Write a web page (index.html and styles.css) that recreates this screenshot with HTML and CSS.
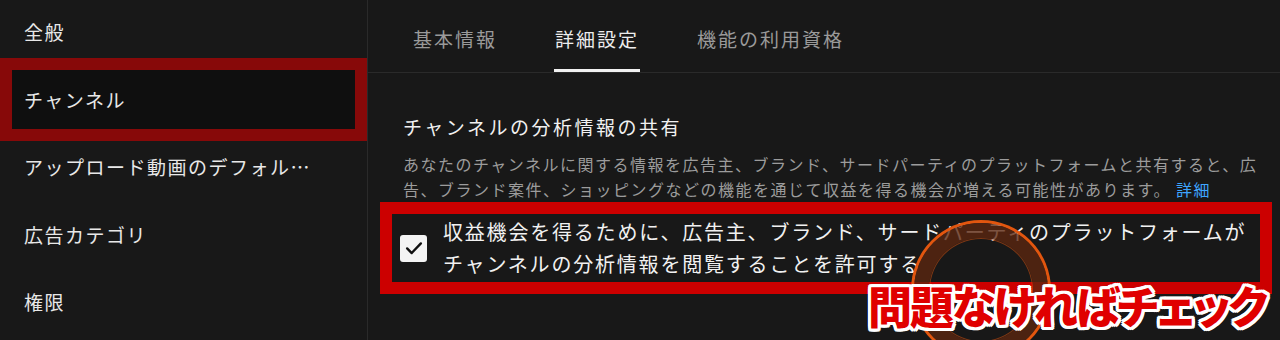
FILE: index.html
```html
<!DOCTYPE html>
<html lang="ja">
<head>
  <meta charset="UTF-8">
  <title>チャンネル設定</title>
  <link rel="stylesheet" href="styles.css">
</head>
<body>
  <div class="layout">
    <nav class="sidebar">
      <div class="side-item">全般</div>
      <div class="side-item selected">チャンネル</div>
      <div class="side-item">アップロード動画のデフォルト設定</div>
      <div class="side-item">広告カテゴリ</div>
      <div class="side-item">権限</div>
    </nav>
    <main class="main">
      <div class="tabs">
        <div class="tab">基本情報</div>
        <div class="tab active">詳細設定</div>
        <div class="tab">機能の利用資格</div>
      </div>
      <section class="content">
        <h2 class="section-title">チャンネルの分析情報の共有</h2>
        <p class="desc">あなたのチャンネルに関する情報を広告主、ブランド、サードパーティのプラットフォームと共有すると、広告、ブランド案件、ショッピングなどの機能を通じて収益を得る機会が増える可能性があります。 <a href="#" class="more">詳細</a></p>
        <div class="highlight">
          <label class="check-row">
            <span class="checkbox">
              <svg viewBox="0 0 24 24" width="22" height="22"><path d="M4.5 12.5l5 5L19.5 7" fill="none" stroke="#0f0f0f" stroke-width="2.6" stroke-linecap="round" stroke-linejoin="round"/></svg>
            </span>
            <span class="check-text">収益機会を得るために、広告主、ブランド、サードパーティのプラットフォームがチャンネルの分析情報を閲覧することを許可する</span>
          </label>
        </div>
      </section>
    </main>
  </div>
  <!-- タップ位置と注釈 -->
  <div class="tap-ring"></div>
  <div class="caption">問題なければチェック</div>
</body>
</html>
```

FILE: styles.css
```css
body {
  margin: 0;
  width: 1280px;
  height: 340px;
  overflow: hidden;
  background: #181818;
  color: #f1f1f1;
  font-family: "Noto Sans CJK JP", "Noto Sans", sans-serif;
  position: relative;
}

.layout { display: flex; height: 340px; overflow: hidden; }

/* サイドバー */
.sidebar {
  width: 367px;
  flex-shrink: 0;
  border-right: 1px solid #2a2a2a;
  margin-top: -2px;
}
.side-item {
  display: block;
  height: 67.5px;
  line-height: 67.5px;
  padding-left: 24px;
  padding-right: 50px;
  font-size: 19px;
  letter-spacing: 1.5px;
  color: #e8e8e8;
  white-space: nowrap;
  overflow: hidden;
  text-overflow: ellipsis;
}
.side-item.selected {
  height: 59px;
  line-height: 59px;
  margin: 4.25px 12px;
  padding-left: 12px;
  background: #0f0f0f;
  outline: 12px solid #870909;
}

/* タブ */
.main { flex: 1; min-width: 0; }
.tabs {
  display: flex;
  gap: 56px;
  height: 73px;
  padding-left: 44px;
  border-bottom: 1px solid #2a2a2a;
  box-sizing: border-box;
}
.tab {
  display: flex;
  align-items: center;
  padding: 8px 1px 0;
  font-size: 19px;
  letter-spacing: 2px;
  color: #9a9a9a;
  border-bottom: 3px solid transparent;
}
.tab.active {
  color: #ececec;
  border-bottom-color: #f1f1f1;
}

/* 内容 */
.content { padding: 39px 14px 0 35px; }
.section-title {
  margin: 0;
  font-size: 19px;
  font-weight: 400;
  letter-spacing: 2.5px;
  line-height: 30px;
  color: #f1f1f1;
}
.desc {
  margin: 10px 0 0;
  font-size: 16px;
  letter-spacing: 1.5px;
  line-height: 25px;
  color: #9c9c9c;
}
.more { color: #3ea6ff; text-decoration: none; }

.highlight {
  margin: 0 0 0 -23px;
  width: 868px;
  border: 12px solid #cc0000;
  padding: 2px 0;
}
.check-row {
  display: flex;
  align-items: center;
  gap: 16px;
  padding-left: 8px;
}
.checkbox {
  width: 27px;
  height: 27px;
  flex-shrink: 0;
  background: #f4f4f4;
  border-radius: 3px;
  display: flex;
  align-items: center;
  justify-content: center;
}
.check-text {
  font-size: 20px;
  letter-spacing: 1.8px;
  line-height: 32px;
  color: #f1f1f1;
}

/* 注釈 */
.tap-ring {
  position: absolute;
  left: 914px;
  top: 223px;
  width: 104px;
  height: 104px;
  border-radius: 50%;
  border: 15px solid rgba(92, 38, 16, 0.78);
  box-shadow: 0 0 0 3px #e2560f, inset 0 0 0 1px rgba(226, 86, 15, 0.5);
}
.caption {
  position: absolute;
  left: 868px;
  top: 279px;
  font-size: 44px;
  font-weight: 900;
  line-height: 52px;
  letter-spacing: -2px;
  font-feature-settings: "palt";
  color: #e00000;
  white-space: nowrap;
  text-shadow:
    3px 0 0 #fff, -3px 0 0 #fff, 0 3px 0 #fff, 0 -3px 0 #fff,
    2px 2px 0 #fff, -2px 2px 0 #fff, 2px -2px 0 #fff, -2px -2px 0 #fff,
    3px 2px 0 #fff, -3px 2px 0 #fff, 3px -2px 0 #fff, -3px -2px 0 #fff,
    2px 3px 0 #fff, -2px 3px 0 #fff, 2px -3px 0 #fff, -2px -3px 0 #fff;
}
```
